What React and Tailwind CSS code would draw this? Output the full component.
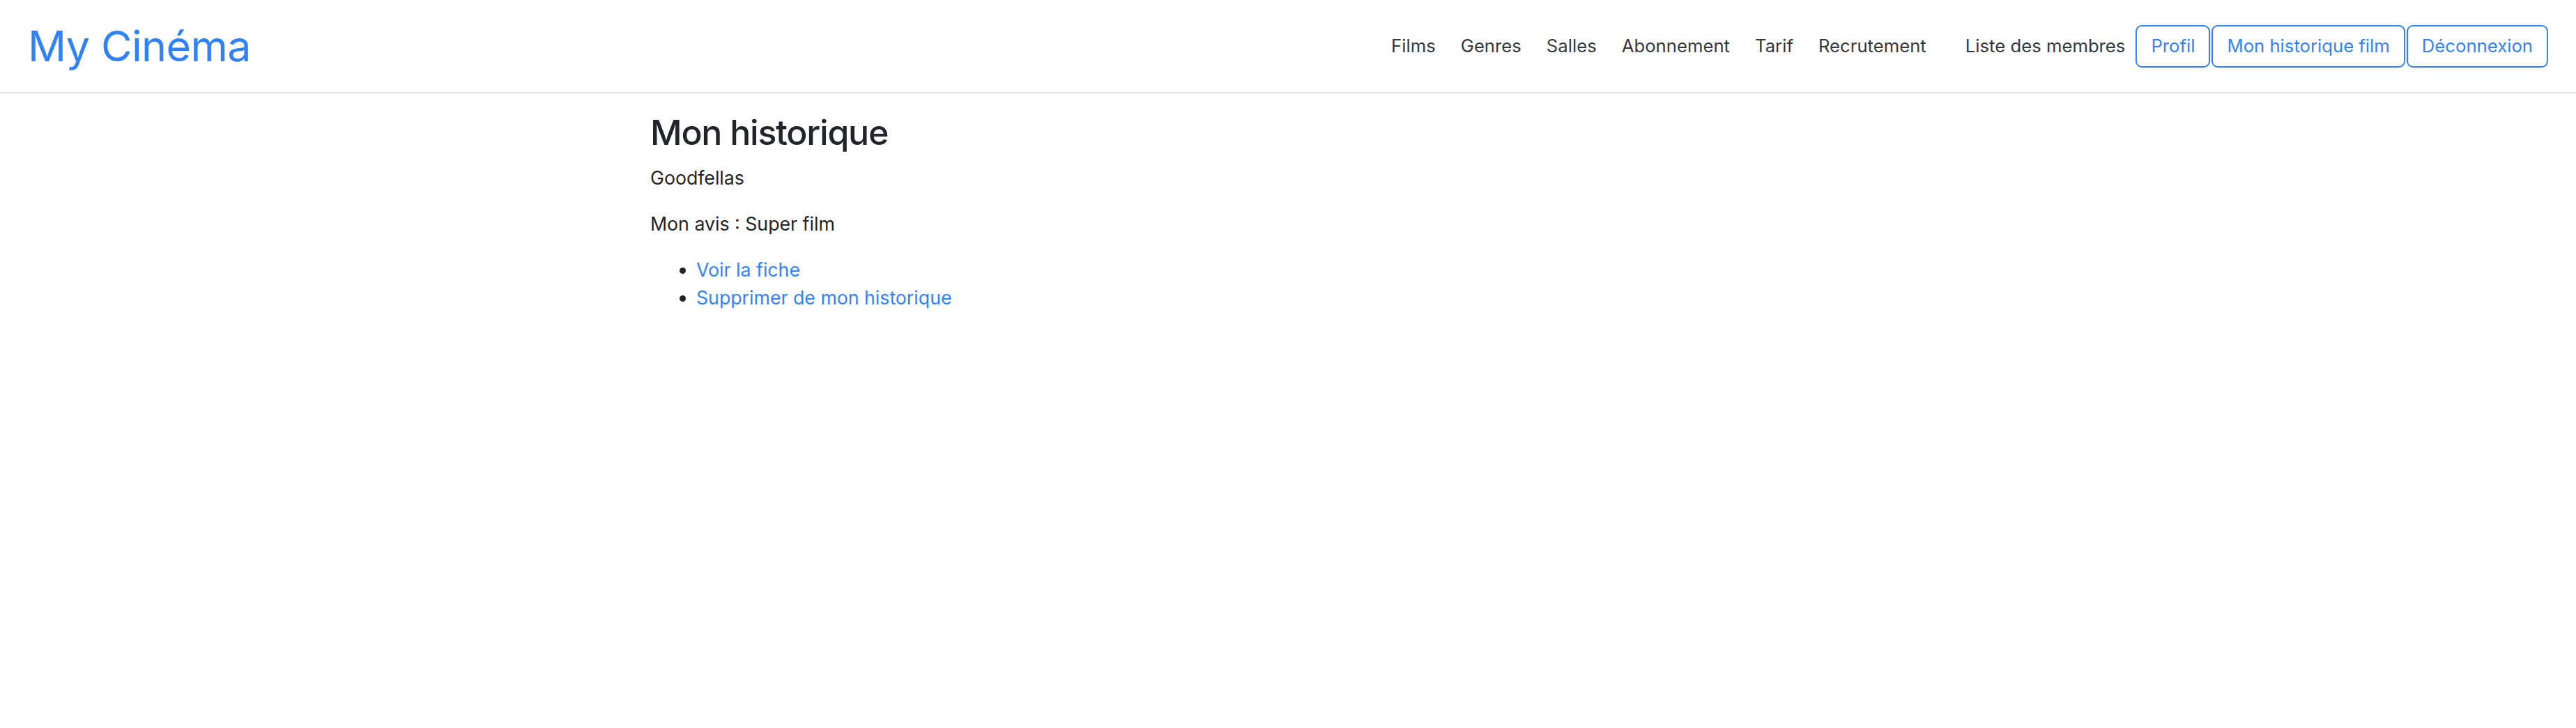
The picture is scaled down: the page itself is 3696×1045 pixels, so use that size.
import React from 'react';

const navLinks = ['Films', 'Genres', 'Salles', 'Abonnement', 'Tarif', 'Recrutement'];
const buttons = ['Profil', 'Mon historique film', 'Déconnexion'];

function Navbar() {
  return (
    <nav className="flex h-[134px] items-center justify-between border-b-2 border-[#e0e2e6] px-[40px]">
      <a href="#" className="text-[61px] leading-none tracking-[-0.01em] text-[#3182f6]">
        My Cinéma
      </a>
      <div className="flex items-center text-[25.7px]">
        <ul className="flex items-center">
          {navLinks.map(link => (
            <li key={link}>
              <a href="#" className="block px-[18px] text-[#35393d]">
                {link}
              </a>
            </li>
          ))}
        </ul>
        <a href="#" className="ml-[20px] block pl-[18px] pr-[15px] text-[#35393d]">
          Liste des membres
        </a>
        <div className="flex items-center gap-[2px]">
          {buttons.map(label => (
            <button
              key={label}
              className="h-[61px] rounded-[9px] border-2 border-[#3182f6] px-[20px] text-[#3182f6]"
            >
              {label}
            </button>
          ))}
        </div>
      </div>
    </nav>
  );
}

export default function App() {
  return (
    <div className="min-h-screen bg-white font-['Inter',sans-serif] text-[26.7px] leading-[40px] text-[#212529]">
      <Navbar />
      <main className="mx-auto w-[1830px] pt-[26px]">
        <h2 className="mb-[15px] text-[50px] font-medium leading-[1.2] tracking-[-0.025em]">Mon historique</h2>
        <p className="mb-[26px]">Goodfellas</p>
        <p className="mb-[26px]">Mon avis : Super film</p>
        <ul className="list-disc pl-[66px]">
          <li>
            <a href="#" className="text-[#3182f6]">Voir la fiche</a>
          </li>
          <li>
            <a href="#" className="text-[#3182f6]">Supprimer de mon historique</a>
          </li>
        </ul>
      </main>
    </div>
  );
}
